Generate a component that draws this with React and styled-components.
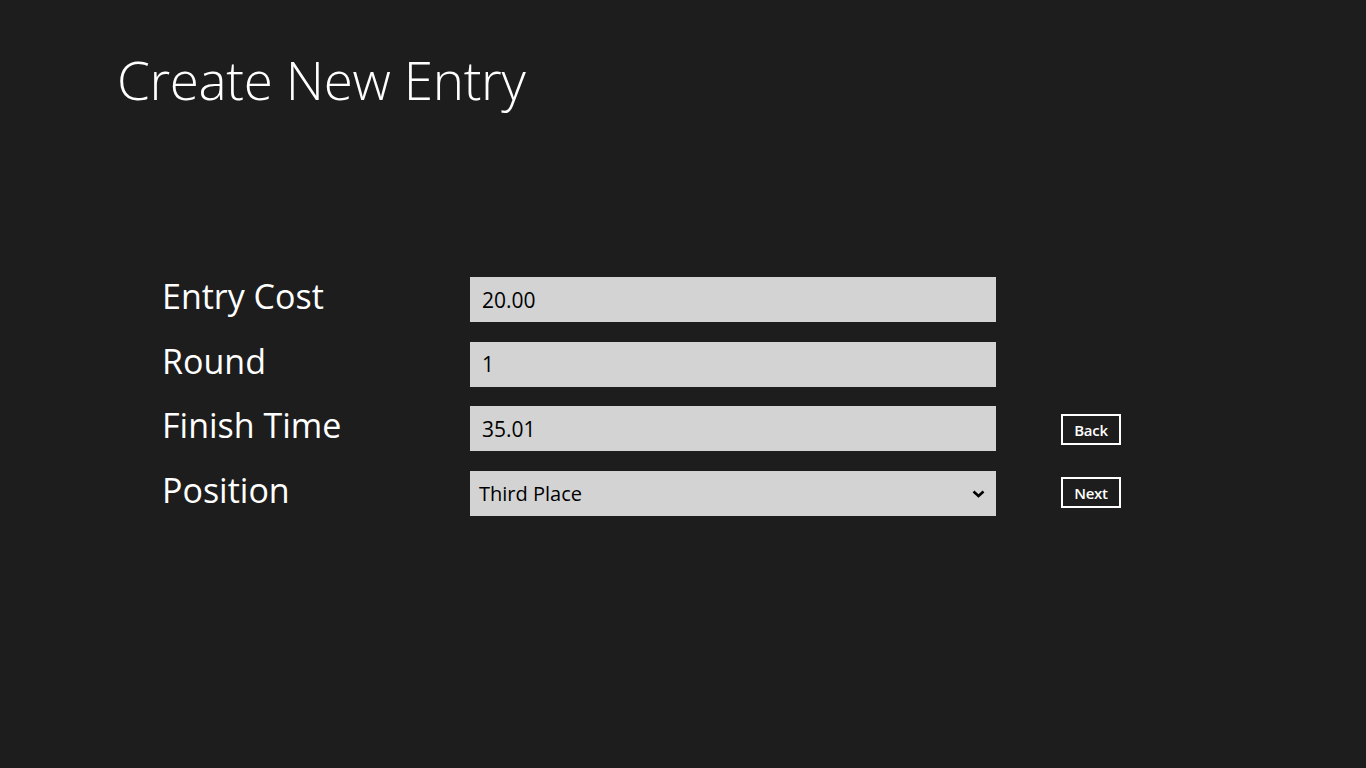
import React, { useState } from "react";
import styled, { createGlobalStyle } from "styled-components";

const GlobalStyle = createGlobalStyle`
  html, body {
    margin: 0;
    padding: 0;
    background: #1d1d1d;
  }
  body {
    font-family: "Segoe UI", "Open Sans", "Noto Sans", sans-serif;
    color: #ffffff;
  }
`;

const Page = styled.div`
  width: 1366px;
  height: 768px;
  background: #1d1d1d;
  box-sizing: border-box;
  padding: 44px 0 0 117px;
`;

const Title = styled.h1`
  margin: 0;
  font-size: 53px;
  font-weight: 300;
  line-height: 72px;
  color: #ffffff;
  letter-spacing: -0.35px;
`;

const Form = styled.div`
  display: grid;
  grid-template-columns: 308px 526px 65px 60px;
  grid-auto-rows: 45px;
  row-gap: 19.6px;
  margin: 161px 0 0 45px;
  align-items: center;
`;

const Label = styled.div`
  font-size: 34px;
  line-height: 45px;
  margin-top: -6px;
  color: #ffffff;
`;

const Field = styled.input`
  height: 45px;
  width: 526px;
  box-sizing: border-box;
  border: none;
  background: #d3d3d3;
  color: #000000;
  font-family: inherit;
  font-size: 21px;
  padding: 0 12px;
  outline: none;
`;

const SelectBox = styled.div`
  position: relative;
  height: 45px;
  width: 526px;
  box-sizing: border-box;
  background: #d3d3d3;
  color: #000000;
  font-size: 20px;
  display: flex;
  align-items: center;
  padding: 0 9px;
`;

const Chevron = styled.svg`
  position: absolute;
  right: 11px;
  top: 50%;
  margin-top: -3px;
`;

const Spacer = styled.div``;

const ActionButton = styled.button`
  grid-column: 4;
  width: 60px;
  height: 31px;
  margin-top: ${(props) => props.$shift || 0}px;
  box-sizing: border-box;
  border: 2px solid #ffffff;
  background: transparent;
  color: #ffffff;
  font-family: inherit;
  font-size: 15px;
  font-weight: 600;
  letter-spacing: -0.3px;
  padding: 0;
  cursor: pointer;
`;

const rows = [
  { label: "Entry Cost", value: "20.00" },
  { label: "Round", value: "1" },
  { label: "Finish Time", value: "35.01" },
];

export default function App() {
  const [values, setValues] = useState(rows.map((r) => r.value));

  return (
    <>
      <GlobalStyle />
      <Page>
        <Title>Create New Entry</Title>
        <Form>
          {rows.map((row, i) => (
            <React.Fragment key={row.label}>
              <Label>{row.label}</Label>
              <Field
                value={values[i]}
                onChange={(e) =>
                  setValues(values.map((v, j) => (j === i ? e.target.value : v)))
                }
              />
              <Spacer />
              {i === 2 ? <ActionButton $shift={2}>Back</ActionButton> : <Spacer />}
            </React.Fragment>
          ))}
          <Label>Position</Label>
          <SelectBox>
            Third Place
            <Chevron width="13" height="8" viewBox="0 0 13 8">
              <path
                d="M1.5 1.5 L6.5 6 L11.5 1.5"
                fill="none"
                stroke="#000"
                strokeWidth="2.6"
              />
            </Chevron>
          </SelectBox>
          <Spacer />
          <ActionButton $shift={-1}>Next</ActionButton>
        </Form>
      </Page>
    </>
  );
}
